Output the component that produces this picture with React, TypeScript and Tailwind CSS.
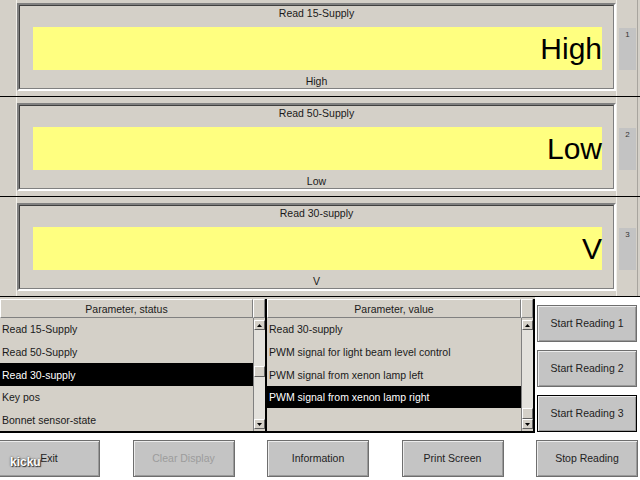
import React from 'react';

interface ReadingProps {
  title: string;
  value: string;
  index: number;
  first?: boolean;
}

function Reading({ title, value, index, first }: ReadingProps) {
  return (
    <div className={`flex border-b border-black ${first ? 'h-[97px]' : 'h-[100px]'}`}>
      <div className="w-[17px] border-r border-[#f1efea]" />
      <div className={`w-[599px] ${first ? 'pt-[3px]' : 'pt-[6px]'}`}>
        <div className="h-[88px] border-2 border-t-[#808080] border-l-[#808080] border-b-white border-r-white">
          <div className="h-full flex flex-col border border-t-[#404040] border-l-[#404040] border-b-[#808080] border-r-[#808080]">
            <div className="h-[14px] leading-[14px] text-center text-[10.5px] text-[#1a1a1a]">{title}</div>
            <div className="mt-[7px] ml-[13px] w-[569px] h-[43px] bg-[#ffff80] flex items-center justify-end text-[30px] leading-none text-black">
              {value}
            </div>
            <div className="mt-[5px] h-[13px] leading-[13px] text-center text-[10.5px] text-[#1a1a1a]">{value}</div>
          </div>
        </div>
      </div>
      <div className="flex-1 flex border-l border-[#f1efea]">
        <div className={`ml-[2px] w-[17px] h-[42px] bg-[#c3c3c3] text-[8px] leading-none text-center pt-[3px] text-[#333] ${first ? 'mt-[28px]' : 'mt-[31px]'}`}>
          {index}
        </div>
        <div className="ml-[1px] w-[1px] bg-[#a8a59f]" />
      </div>
    </div>
  );
}

function Arrow({ down }: { down?: boolean }) {
  return (
    <div className="h-[10px] bg-[#d4d0c8] border border-t-white border-l-white border-b-[#606060] border-r-[#606060] flex items-center justify-center">
      <svg width="5" height="3" viewBox="0 0 5 3">
        <path d={down ? 'M0 0h5L2.5 3z' : 'M0 3h5L2.5 0z'} fill="#000" />
      </svg>
    </div>
  );
}

interface ListProps {
  header: string;
  rows: string[];
  selected: number;
  thumbTop: string;
  width: string;
}

function List({ header, rows, selected, thumbTop, width }: ListProps) {
  return (
    <div className={`${width} flex border-r-2 border-b-2 border-black`}>
      <div className="flex-1 flex flex-col">
        <div className="h-[19px] pt-[1px] leading-[17px] text-center text-[10.5px] text-[#1a1a1a] border border-t-white border-l-white border-b-[#808080] border-r-[#808080]">
          {header}
        </div>
        {rows.map((r, i) => (
          <div
            key={i}
            className={`h-[22.6px] flex items-center pt-[2px] pl-[2px] text-[10.5px] whitespace-nowrap ${
              i === selected ? 'bg-black text-white' : 'text-[#1a1a1a]'
            }`}
          >
            {r}
          </div>
        ))}
      </div>
      <div className="w-[12px] flex flex-col">
        <div className="h-[19px] border border-t-white border-l-white border-b-[#808080] border-r-[#808080]" />
        <div className="flex-1 flex flex-col py-[2px] border-l border-[#808080]">
          <Arrow />
          <div className="flex-1 relative bg-[#e3e1dc]">
            <div className={`absolute left-0 right-0 h-[11px] bg-[#d4d0c8] border border-t-white border-l-white border-b-[#606060] border-r-[#606060] ${thumbTop}`} />
          </div>
          <Arrow down />
        </div>
      </div>
    </div>
  );
}

function Button({ label, disabled, focused, wide }: { label: string; disabled?: boolean; focused?: boolean; wide?: boolean }) {
  return (
    <div
      className={`${wide ? 'w-[102px]' : 'w-[100px]'} h-[37px] shrink-0 flex items-center justify-center pt-[1px] bg-[#c4c4c4] border text-[10.5px] shadow-[inset_1px_1px_0_#ececec,inset_-1px_-1px_0_#9a9a9a] ${
        focused ? 'border-black' : 'border-[#6e6e6e]'
      } ${disabled ? 'text-[#9c9c9c]' : 'text-[#222]'}`}
    >
      {label}
    </div>
  );
}

export default function App() {
  return (
    <div className="relative w-[640px] h-[480px] overflow-hidden bg-[#d4d0c8] flex flex-col font-['Liberation_Sans',Arial,sans-serif]">
      <Reading first title="Read 15-Supply" value="High" index={1} />
      <Reading title="Read 50-Supply" value="Low" index={2} />
      <Reading title="Read 30-supply" value="V" index={3} />

      <div className="h-[136px] flex pt-[2px]">
        <List
          width="w-[267px]"
          header="Parameter, status"
          rows={['Read 15-Supply', 'Read 50-Supply', 'Read 30-supply', 'Key pos', 'Bonnet sensor-state']}
          selected={2}
          thumbTop="top-[36px]"
        />
        <List
          width="w-[268px]"
          header="Parameter, value"
          rows={[
            'Read 30-supply',
            'PWM signal for light beam level control',
            'PWM signal from xenon lamp left',
            'PWM signal from xenon lamp right',
            '',
          ]}
          selected={3}
          thumbTop="bottom-0"
        />
        <div className="flex-1 bg-white -mt-[2px] pt-[8px] pl-[2px] flex flex-col gap-[8px]">
          <Button label="Start Reading 1" />
          <Button label="Start Reading 2" />
          <Button label="Start Reading 3" focused />
        </div>
      </div>

      <div className="flex-1 bg-white pt-[7px] -ml-[2px] flex gap-[32.5px]">
        <Button wide label="Exit" />
        <Button wide label="Clear Display" disabled />
        <Button wide label="Information" />
        <Button wide label="Print Screen" />
        <Button wide label="Stop Reading" />
      </div>

      <div className="absolute left-[10px] top-[453px] text-[12px] font-bold text-white [text-shadow:0_0_2px_#333,1px_1px_1px_#333]">
        kicku
      </div>
    </div>
  );
}
